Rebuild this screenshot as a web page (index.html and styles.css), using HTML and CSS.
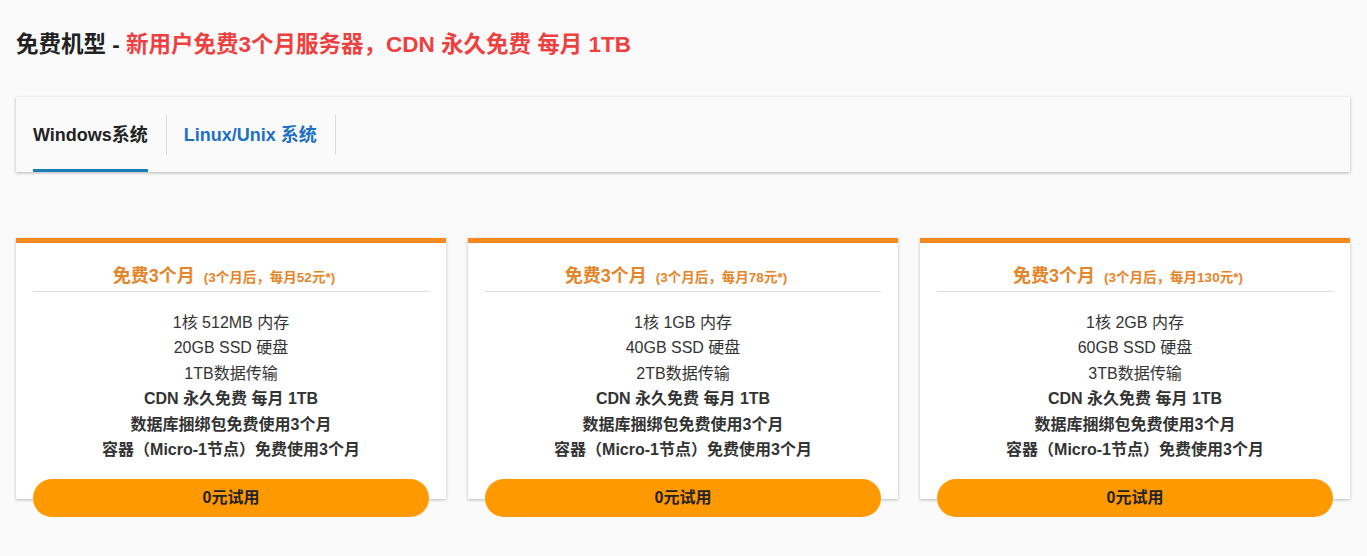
FILE: index.html
```html
<!DOCTYPE html>
<html>
  <head>
    <meta charset="UTF-8">
    <meta name="viewport" content="width=device-width, initial-scale=1.0">
    <title>免费机型</title>
    <link rel="stylesheet" href="styles.css">
  </head>
  <body>
    <div class="page">
      <!-- Title -->
      <h2 class="page-title">免费机型 - <span class="hot">新用户免费3个月服务器，CDN 永久免费 每月 1TB</span></h2>

      <!-- Tabs -->
      <div class="tab-box">
        <a class="tab active" href="#">Windows系统</a>
        <span class="tab-sep"></span>
        <a class="tab" href="#">Linux/Unix 系统</a>
        <span class="tab-sep"></span>
      </div>

      <!-- Plans -->
      <div class="plans">
        <div class="plan">
          <div class="plan-head">免费3个月 <small>(3个月后，每月52元*)</small></div>
          <ul class="plan-list">
            <li>1核 512MB 内存</li>
            <li>20GB SSD 硬盘</li>
            <li>1TB数据传输</li>
            <li class="b">CDN 永久免费 每月 1TB</li>
            <li class="b">数据库捆绑包免费使用3个月</li>
            <li class="b">容器（Micro-1节点）免费使用3个月</li>
          </ul>
          <a class="try-btn" href="#">0元试用</a>
        </div>
        <div class="plan">
          <div class="plan-head">免费3个月 <small>(3个月后，每月78元*)</small></div>
          <ul class="plan-list">
            <li>1核 1GB 内存</li>
            <li>40GB SSD 硬盘</li>
            <li>2TB数据传输</li>
            <li class="b">CDN 永久免费 每月 1TB</li>
            <li class="b">数据库捆绑包免费使用3个月</li>
            <li class="b">容器（Micro-1节点）免费使用3个月</li>
          </ul>
          <a class="try-btn" href="#">0元试用</a>
        </div>
        <div class="plan">
          <div class="plan-head">免费3个月 <small>(3个月后，每月130元*)</small></div>
          <ul class="plan-list">
            <li>1核 2GB 内存</li>
            <li>60GB SSD 硬盘</li>
            <li>3TB数据传输</li>
            <li class="b">CDN 永久免费 每月 1TB</li>
            <li class="b">数据库捆绑包免费使用3个月</li>
            <li class="b">容器（Micro-1节点）免费使用3个月</li>
          </ul>
          <a class="try-btn" href="#">0元试用</a>
        </div>
      </div>
    </div>
  </body>
</html>
```

FILE: styles.css
```css
body {
  margin: 0;
  background: #fafafa;
  font-family: "Liberation Sans", Arial, "Noto Sans CJK SC", sans-serif;
  color: #333;
}

.page {
  padding: 31px 17px 40px 16px;
}

.page-title {
  margin: 0;
  font-size: 22.5px;
  line-height: 28px;
  font-weight: bold;
  color: #222;
}

.page-title .hot {
  color: #ee4040;
}

.tab-box {
  display: flex;
  align-items: stretch;
  height: 75px;
  margin-top: 38px;
  padding-left: 17px;
  background: #fafafa;
  box-shadow: 0 1px 3px rgba(0, 0, 0, 0.28);
}

.tab {
  display: flex;
  align-items: center;
  border-bottom: 3px solid transparent;
  font-size: 18px;
  font-weight: bold;
  color: #1d70c4;
  text-decoration: none;
  margin-right: 18px;
}

.tab.active {
  color: #222;
  border-bottom-color: #1a7db5;
}

.tab-sep {
  align-self: center;
  width: 1px;
  height: 40px;
  margin-right: 17px;
  background: #dcdcdc;
}

.plans {
  display: grid;
  grid-template-columns: repeat(3, 1fr);
  gap: 22px;
  margin-top: 66px;
}

.plan {
  display: flex;
  flex-direction: column;
  background: #fff;
  border-top: 5px solid #f7891f;
  padding: 0 17px;
  box-shadow: 0 1px 3px rgba(0, 0, 0, 0.25);
}

.plan-head {
  margin-top: 21px;
  padding: 0 14px 1px 0;
  border-bottom: 1px solid #dcdcdc;
  text-align: center;
  font-size: 18px;
  line-height: 24px;
  font-weight: bold;
  color: #e5852a;
}

.plan-head small {
  font-size: 13.5px;
  margin-left: 4px;
}

.plan-list {
  list-style: none;
  margin: 18px 0 0;
  padding: 0;
  text-align: center;
  font-size: 16px;
  line-height: 25.4px;
  color: #333;
}

.plan-list .b {
  font-weight: bold;
}

.try-btn {
  display: block;
  height: 38px;
  line-height: 38px;
  margin-top: 17px;
  margin-bottom: -18px;
  border-radius: 19px;
  background: #ff9900;
  text-align: center;
  font-size: 16px;
  font-weight: bold;
  color: #222;
  text-decoration: none;
}
```
